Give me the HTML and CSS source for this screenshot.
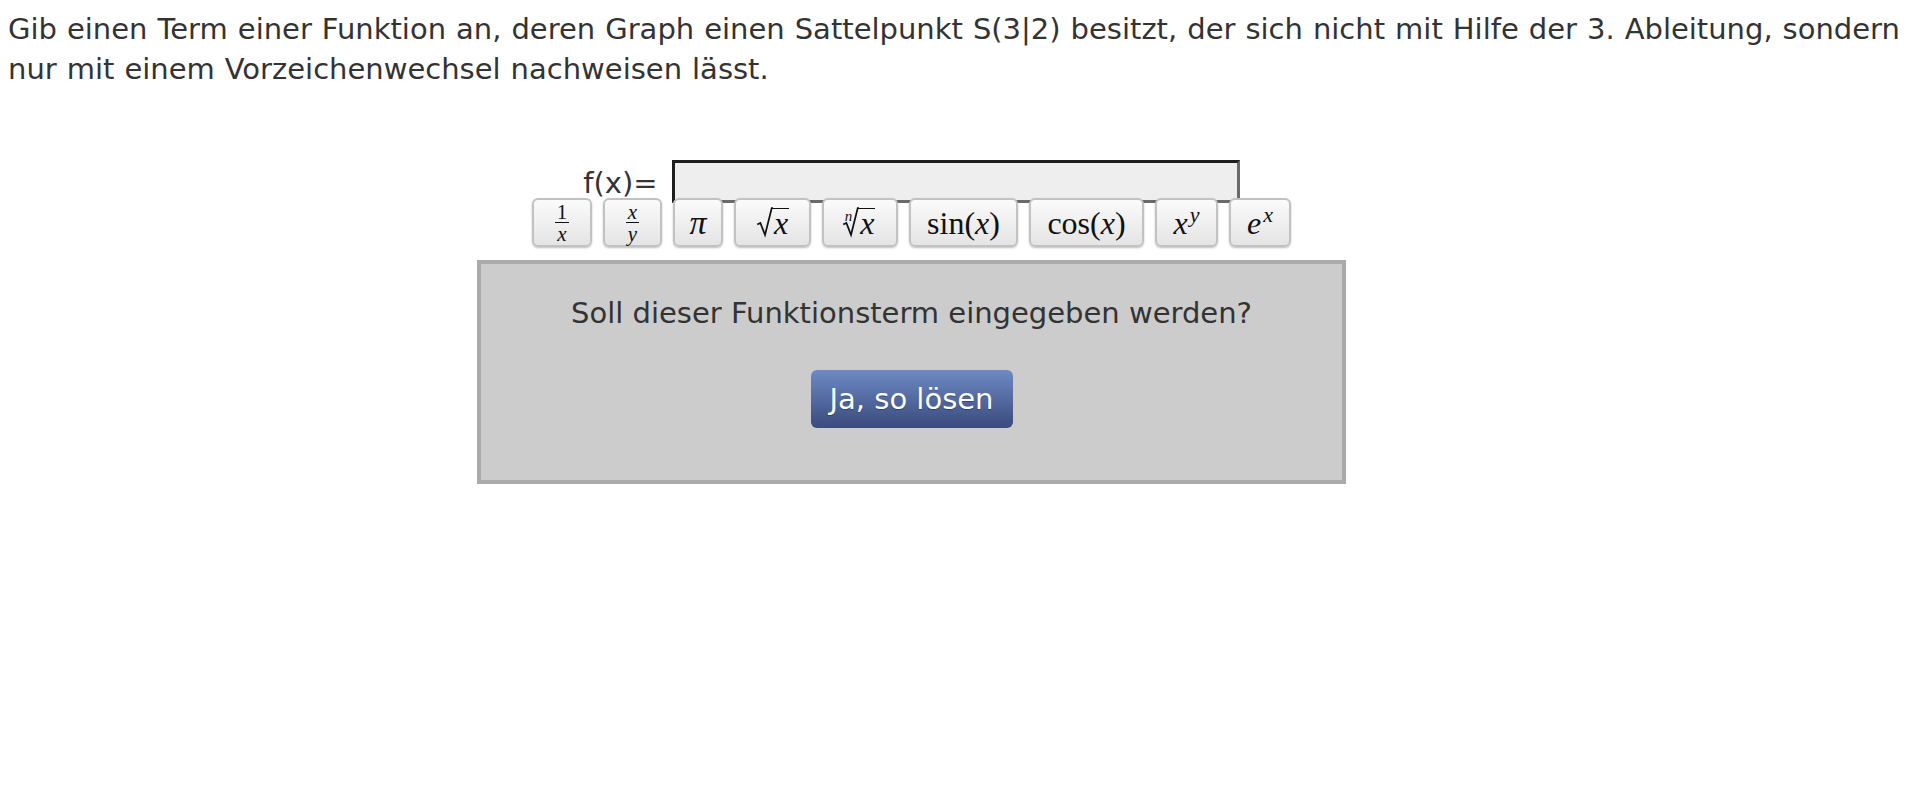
FILE: index.html
```html
<!DOCTYPE html>
<html lang="de">
<head>
<meta charset="utf-8">
<title>Aufgabe</title>
<link rel="stylesheet" href="styles.css">
</head>
<body>
<p class="question">Gib einen Term einer Funktion an, deren Graph einen Sattelpunkt S(3|2) besitzt, der sich nicht mit Hilfe der 3. Ableitung, sondern nur mit einem Vorzeichenwechsel nachweisen lässt.</p>

<div class="task">
  <div class="input-row">
    <label class="fx-label" for="term">f(x)=</label>
    <input id="term" class="term-input" type="text">
  </div>

  <div class="keypad">
    <button class="key w60"><span class="frac"><span class="num">1</span><span class="den mi">x</span></span></button>
    <button class="key w59"><span class="frac"><span class="num mi">x</span><span class="den mi">y</span></span></button>
    <button class="key w50"><span class="mi pi">π</span></button>
    <button class="key w77"><span class="rad"><svg class="rad-sign" viewBox="0 0 16 30" width="17" height="31"><path d="M1 17 L4 15.5 L8.5 27 L15 1 L16.5 1" fill="none" stroke="#111" stroke-width="1.7" stroke-linejoin="miter"/></svg><span class="radicand mi">x</span></span></button>
    <button class="key w76"><span class="rad"><span class="rad-index mi">n</span><svg class="rad-sign" viewBox="0 0 16 30" width="17" height="31"><path d="M1 17 L4 15.5 L8.5 27 L15 1 L16.5 1" fill="none" stroke="#111" stroke-width="1.7" stroke-linejoin="miter"/></svg><span class="radicand mi">x</span></span></button>
    <button class="key w109"><span class="mrow">sin(<span class="mi">x</span>)</span></button>
    <button class="key w115"><span class="mrow">cos(<span class="mi">x</span>)</span></button>
    <button class="key w63"><span class="mrow"><span class="mi">x</span><sup class="mi sup">y</sup></span></button>
    <button class="key w62"><span class="mrow"><span class="mi">e</span><sup class="mi sup">x</sup></span></button>
  </div>

  <div class="confirm-box">
    <p class="confirm-text">Soll dieser Funktionsterm eingegeben werden?</p>
    <button class="solve-btn">Ja, so lösen</button>
  </div>
</div>
</body>
</html>
```

FILE: styles.css
```css
html, body {
  background: #ffffff;
}

body {
  margin: 8px;
  font-family: "DejaVu Sans", Verdana, sans-serif;
  color: #333333;
}

.question {
  margin: 0;
  padding-top: 1px;
  font-size: 29px;
  line-height: 40px;
  word-spacing: 0.8px;
}

.task {
  width: 869px;
  margin: 71px 0 0 469px;
  display: flex;
  flex-direction: column;
  align-items: center;
}

.input-row {
  display: flex;
  align-items: flex-end;
  gap: 14px;
}

.fx-label {
  font-size: 29px;
  line-height: 29px;
  padding-bottom: 5px;
  color: #333333;
}

.term-input {
  box-sizing: border-box;
  width: 568px;
  height: 43px;
  margin: 0;
  padding: 0 8px;
  background: #eeeeee;
  border-style: solid;
  border-width: 3px;
  border-color: #1e1e1e #6a6a6a #6a6a6a #1e1e1e;
  outline: none;
  font-family: "DejaVu Sans", sans-serif;
  font-size: 22px;
}

.keypad {
  display: flex;
  gap: 11px;
  margin-top: -5px;
}

.key {
  box-sizing: border-box;
  height: 49px;
  padding: 0;
  display: flex;
  align-items: center;
  justify-content: center;
  border: 2px solid #c2c2c2;
  border-radius: 6px;
  background: linear-gradient(#fbfbfb, #e4e4e4);
  box-shadow: 0 1px 2px rgba(0, 0, 0, 0.25);
  font-family: "Liberation Serif", "DejaVu Serif", serif;
  font-size: 32px;
  color: #111111;
  line-height: 1;
}

.w60 { width: 60px; }
.w59 { width: 59px; }
.w50 { width: 50px; }
.w77 { width: 77px; }
.w76 { width: 76px; }
.w109 { width: 109px; }
.w115 { width: 115px; }
.w63 { width: 63px; }
.w62 { width: 62px; }

.mi {
  font-style: italic;
}

.pi {
  font-size: 34px;
}

.frac {
  display: inline-flex;
  flex-direction: column;
  align-items: center;
  font-size: 21px;
  line-height: 18px;
}

.frac .num {
  padding: 0 2px 1px;
  border-bottom: 1.5px solid #111111;
}

.frac .den {
  padding-top: 2px;
}

.rad {
  display: inline-flex;
  align-items: flex-start;
}

.rad-sign {
  display: block;
}

.radicand {
  border-top: 1.7px solid #111111;
  line-height: 29px;
  padding: 0 1px;
  margin-top: 1px;
}

.rad-index {
  font-size: 15px;
  line-height: 15px;
  margin-right: -10px;
  margin-top: 2px;
}

.mrow {
  white-space: nowrap;
}

.sup {
  font-size: 22px;
  vertical-align: 12px;
  line-height: 0;
  margin-left: 2px;
}

.confirm-box {
  box-sizing: border-box;
  width: 869px;
  height: 224px;
  margin-top: 13px;
  border: 4px solid #aaaaaa;
  background: #cccccc;
  padding-top: 29px;
  display: flex;
  flex-direction: column;
  align-items: center;
}

.confirm-text {
  margin: 0;
  font-size: 29px;
  line-height: 40px;
  color: #333333;
}

.solve-btn {
  box-sizing: border-box;
  width: 202px;
  height: 58px;
  margin-top: 37px;
  border: none;
  border-radius: 6px;
  background: linear-gradient(#6d8ac5, #3a4a7c);
  color: #ffffff;
  font-family: "DejaVu Sans", sans-serif;
  font-size: 29px;
  padding: 0;
  text-shadow: 0 1px 1px rgba(0, 0, 0, 0.3);
}
```
